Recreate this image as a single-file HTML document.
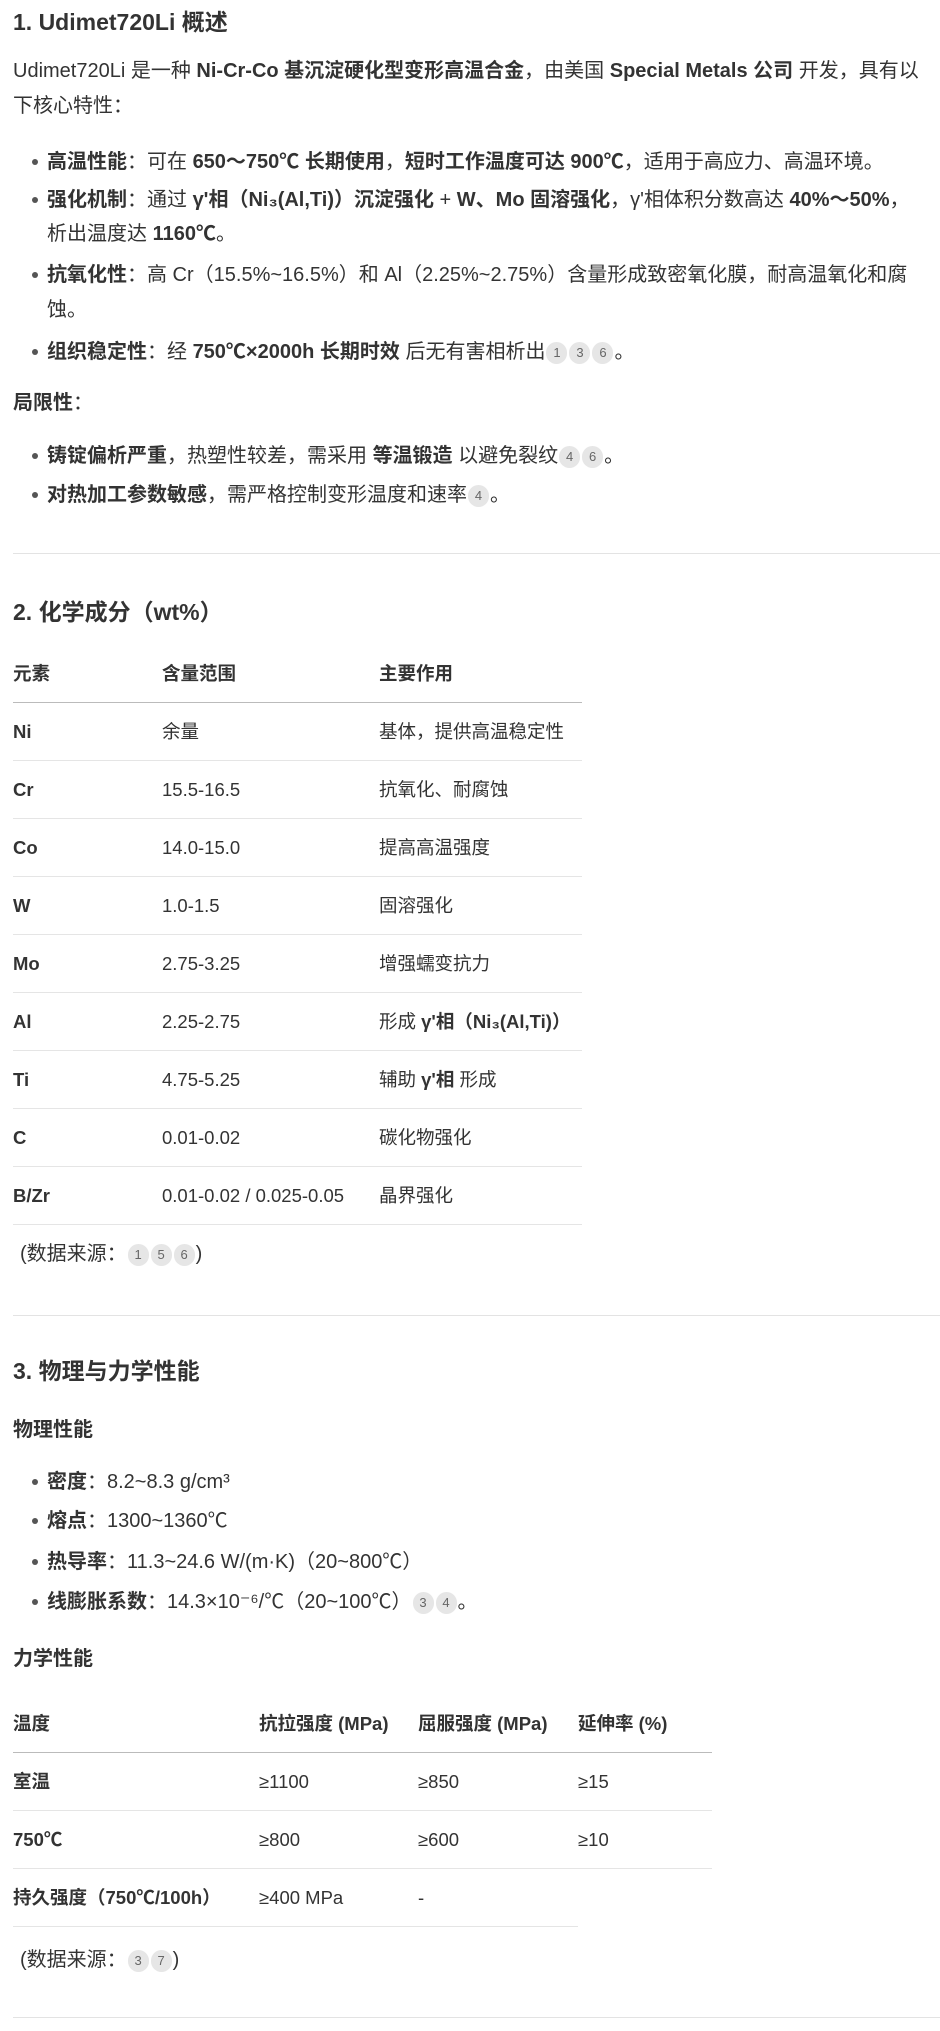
<!DOCTYPE html>
<html><head><meta charset="utf-8"><style>
body{margin:0;width:940px;height:2031px;background:#fff;position:relative;font-family:"Liberation Sans","Noto Sans CJK SC",sans-serif;color:#333;font-size:20px;overflow:hidden}
.l{position:absolute;left:13px;line-height:30px;height:30px;white-space:nowrap}
.b{left:47px}
.b::before{content:"";position:absolute;left-15px;left:-15px;top:12px;width:6px;height:6px;border-radius:50%;background:#555}
h1,h2{margin:0;font-size:23px;font-weight:bold;position:absolute;left:13px;line-height:30px}
.c{display:inline-block;width:21px;height:22px;border-radius:11px;background:#e6e6e6;color:#666;font-size:13px;line-height:22px;text-align:center;vertical-align:1px;margin:0 1px}
.hr{position:absolute;left:13px;width:927px;height:1px;background:#e3e3e3}
table{position:absolute;left:13px;border-collapse:collapse;font-size:18.5px}
td,th{text-align:left;padding:0;height:57px;border-bottom:1px solid #e5e5e5;white-space:nowrap;line-height:26px;vertical-align:middle}
th{border-bottom:1.5px solid #bbb;height:56px}
td:first-child{font-weight:bold}
</style></head><body>
<h1 style="top:7px">1. Udimet720Li 概述</h1>
<div class="l" style="top:56px">Udimet720Li 是一种 <b>Ni-Cr-Co 基沉淀硬化型变形高温合金</b>，由美国 <b>Special Metals 公司</b> 开发，具有以</div>
<div class="l" style="top:91px">下核心特性：</div>
<div class="l b" style="top:147px"><b>高温性能</b>：可在 <b>650～750℃ 长期使用</b>，<b>短时工作温度可达 900℃</b>，适用于高应力、高温环境。</div>
<div class="l b" style="top:185px"><b>强化机制</b>：通过 <b>γ'相（Ni₃(Al,Ti)）沉淀强化</b> + <b>W、Mo 固溶强化</b>，γ'相体积分数高达 <b>40%～50%</b>，</div>
<div class="l" style="top:219px;left:47px">析出温度达 <b>1160℃</b>。</div>
<div class="l b" style="top:260px"><b>抗氧化性</b>：高 Cr（15.5%~16.5%）和 Al（2.25%~2.75%）含量形成致密氧化膜，耐高温氧化和腐</div>
<div class="l" style="top:295px;left:47px">蚀。</div>
<div class="l b" style="top:337px"><b>组织稳定性</b>：经 <b>750℃×2000h 长期时效</b> 后无有害相析出<span class="c">1</span><span class="c">3</span><span class="c">6</span>。</div>
<div class="l" style="top:388px"><b>局限性</b>：</div>
<div class="l b" style="top:441px"><b>铸锭偏析严重</b>，热塑性较差，需采用 <b>等温锻造</b> 以避免裂纹<span class="c">4</span><span class="c">6</span>。</div>
<div class="l b" style="top:480px"><b>对热加工参数敏感</b>，需严格控制变形温度和速率<span class="c">4</span>。</div>
<div class="hr" style="top:553px"></div>
<h2 style="top:597px">2. 化学成分（wt%）</h2>
<table style="top:646px;width:569px">
<tr><th style="width:149px">元素</th><th style="width:217px">含量范围</th><th>主要作用</th></tr>
<tr><td>Ni</td><td>余量</td><td>基体，提供高温稳定性</td></tr>
<tr><td>Cr</td><td>15.5-16.5</td><td>抗氧化、耐腐蚀</td></tr>
<tr><td>Co</td><td>14.0-15.0</td><td>提高高温强度</td></tr>
<tr><td>W</td><td>1.0-1.5</td><td>固溶强化</td></tr>
<tr><td>Mo</td><td>2.75-3.25</td><td>增强蠕变抗力</td></tr>
<tr><td>Al</td><td>2.25-2.75</td><td>形成 <b>γ'相（Ni₃(Al,Ti)）</b></td></tr>
<tr><td>Ti</td><td>4.75-5.25</td><td>辅助 <b>γ'相</b> 形成</td></tr>
<tr><td>C</td><td>0.01-0.02</td><td>碳化物强化</td></tr>
<tr><td>B/Zr</td><td>0.01-0.02 / 0.025-0.05</td><td>晶界强化</td></tr>
</table>
<div class="l" style="top:1239px;left:20px">(数据来源：<span class="c">1</span><span class="c">5</span><span class="c">6</span>)</div>
<div class="hr" style="top:1315px"></div>
<h2 style="top:1356px">3. 物理与力学性能</h2>
<div class="l" style="top:1415px"><b>物理性能</b></div>
<div class="l b" style="top:1467px"><b>密度</b>：8.2~8.3 g/cm³</div>
<div class="l b" style="top:1506px"><b>熔点</b>：1300~1360℃</div>
<div class="l b" style="top:1547px"><b>热导率</b>：11.3~24.6 W/(m·K)（20~800℃）</div>
<div class="l b" style="top:1587px"><b>线膨胀系数</b>：14.3×10⁻⁶/℃（20~100℃）<span class="c">3</span><span class="c">4</span>。</div>
<div class="l" style="top:1644px"><b>力学性能</b></div>
<table style="top:1696px;width:699px">
<tr><th style="width:246px">温度</th><th style="width:159px">抗拉强度 (MPa)</th><th style="width:160px">屈服强度 (MPa)</th><th>延伸率 (%)</th></tr>
<tr><td>室温</td><td>≥1100</td><td>≥850</td><td>≥15</td></tr>
<tr><td>750℃</td><td>≥800</td><td>≥600</td><td>≥10</td></tr>
<tr><td>持久强度（750℃/100h）</td><td>≥400 MPa</td><td>-</td><td style="border:none"></td></tr>
</table>
<div class="l" style="top:1945px;left:20px">(数据来源：<span class="c">3</span><span class="c">7</span>)</div>
<div class="hr" style="top:2017px"></div>
</body></html>
